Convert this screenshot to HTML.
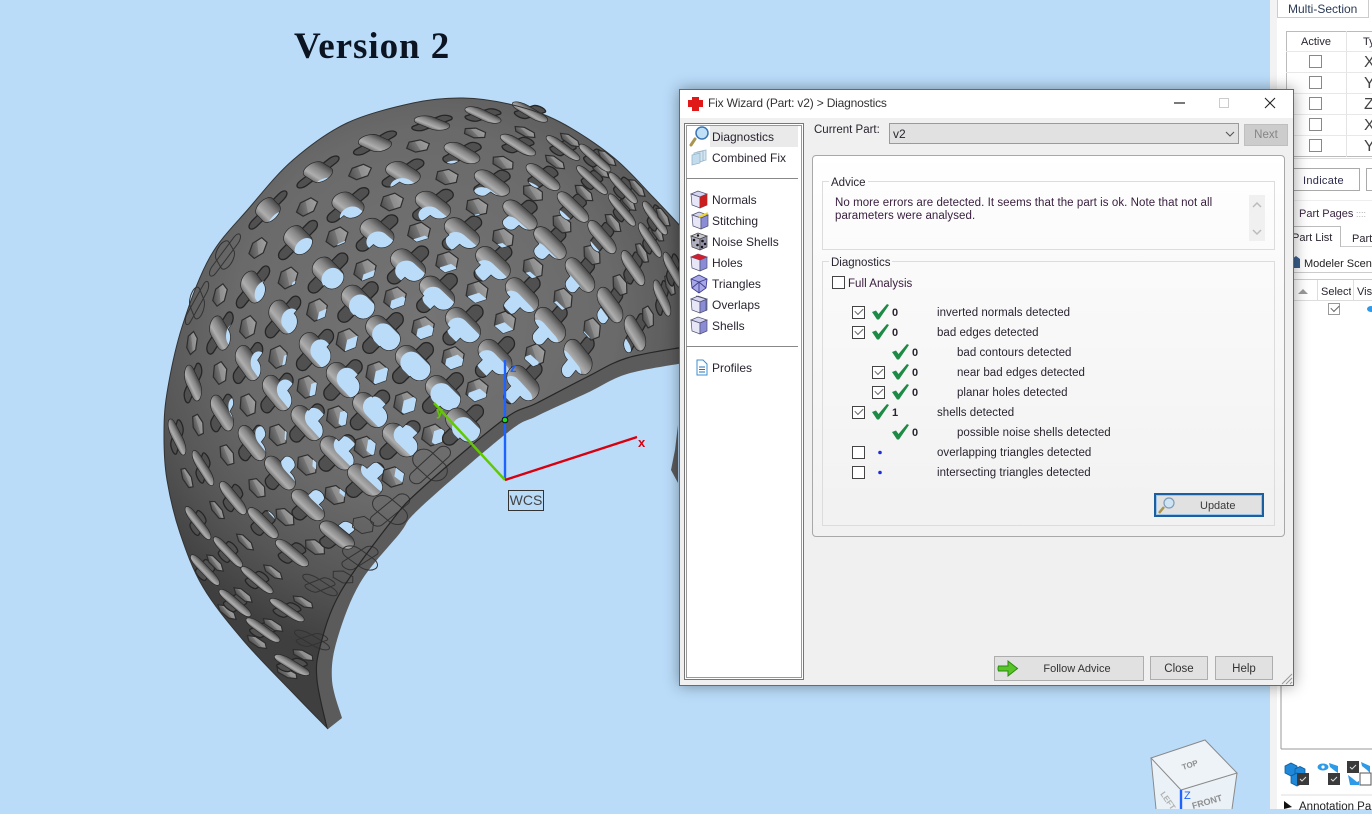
<!DOCTYPE html>
<html><head><meta charset="utf-8"><title>Fix Wizard</title>
<style>
html,body{margin:0;padding:0}
body{width:1372px;height:809px;overflow:hidden;position:relative;background:#badcf9;font-family:"Liberation Sans",sans-serif}
.a{position:absolute;box-sizing:border-box}
.t{position:absolute;white-space:nowrap;font:12px/14px "Liberation Sans",sans-serif;color:#2a2430}
.b{font-weight:bold;font-size:11px}
.l{font-size:11.5px;letter-spacing:.03px}
.cb{position:absolute;box-sizing:border-box;width:13px;height:13px;border:1px solid #444;background:#fff}
.cb.on::after{content:"";position:absolute;left:2px;top:1px;width:7px;height:4px;border-left:1px solid #666;border-bottom:1px solid #666;transform:rotate(-45deg)}
.btn{position:absolute;box-sizing:border-box;background:#e1e1e1;border:1px solid #adadad;text-align:center;font:12px/24px "Liberation Sans",sans-serif;color:#333}
svg{position:absolute;left:0;top:0}
</style></head><body>

<svg width="1372" height="809" viewBox="0 0 1372 809">
<defs>
<radialGradient id="body" gradientUnits="userSpaceOnUse" cx="425" cy="320" r="345">
<stop offset="0" stop-color="#747474"/><stop offset=".55" stop-color="#6a6a6a"/><stop offset=".8" stop-color="#565656"/><stop offset="1" stop-color="#3f3f3f"/></radialGradient>
<linearGradient id="armg" gradientUnits="userSpaceOnUse" x1="0" y1="-11" x2="0" y2="11">
<stop offset="0" stop-color="#4a4a4a"/><stop offset=".35" stop-color="#868686"/><stop offset=".75" stop-color="#aeaeae"/><stop offset="1" stop-color="#777"/></linearGradient>
<linearGradient id="hexg" gradientUnits="userSpaceOnUse" x1="-12" y1="0" x2="12" y2="0">
<stop offset="0" stop-color="#4c4c4c"/><stop offset=".48" stop-color="#757575"/><stop offset=".5" stop-color="#8c8c8c"/><stop offset="1" stop-color="#a0a0a0"/></linearGradient>
<path id="X" d="M-9,-11H9A11,11 0 0 1 9,11H-9A11,11 0 0 1 -9,-11ZM-7,-19A7,7 0 0 1 7,-19V19A7,7 0 0 1 -7,19Z"/>
<path id="XA" d="M-9,-11H9A11,11 0 0 1 9,11H-9A11,11 0 0 1 -9,-11Z"/>
<path id="H" d="M-12,0L-6,-10L6,-10L12,0L6,10L-6,10Z"/>
<path id="XO" vector-effect="non-scaling-stroke" d="M-9,-11H9A11,11 0 0 1 9,11H-9A11,11 0 0 1 -9,-11ZM-7,-19A7,7 0 0 1 7,-19V19A7,7 0 0 1 -7,19Z"/>
<path id="HO" vector-effect="non-scaling-stroke" d="M-12,0L-6,-10L6,-10L12,0L6,10L-6,10Z"/>
</defs>
<path id="rimfill" fill="#5b5b5b"/>
<path id="dome" fill="url(#body)"/>
<g id="holes"></g>
<path id="rimline" fill="none" stroke="#262626" stroke-width="1.2"/>
<path id="sil" fill="none" stroke="#333" stroke-width="1"/>
<path d="M678,425 L675,450 L671,470 L678,483Z" fill="#5c5c5c"/>

<!-- axes -->
<line x1="505" y1="480" x2="505" y2="360" stroke="#1f63ff" stroke-width="2.4"/>
<line x1="505" y1="480" x2="434" y2="403" stroke="#63c800" stroke-width="2.4"/>
<line x1="505" y1="480" x2="637" y2="437" stroke="#d8000f" stroke-width="2.4"/>
<circle cx="505" cy="420" r="2.8" fill="#22d822" stroke="#111" stroke-width="1"/>
<text x="510" y="372" font-family="Liberation Sans" font-size="13" font-weight="bold" fill="#1f63ff">z</text>
<text x="436" y="416" font-family="Liberation Sans" font-size="13" font-weight="bold" fill="#63c800">y</text>
<text x="638" y="447" font-family="Liberation Sans" font-size="13" font-weight="bold" fill="#d8000f">x</text>

<!-- view cube -->
<path d="M1151,758 L1205,740 L1237,773 L1232,809 L1156,809Z" fill="#eaf1f7"/>
<path d="M1151,758 L1205,740 L1237,773 L1181,790Z" fill="#eef3f8" stroke="#8a8a8a" stroke-width="1"/>
<path d="M1151,758 L1156,809 M1237,773 L1232,809" fill="none" stroke="#8a8a8a"/>
<path d="M1181,790 L1181,809" stroke="#1f63ff" stroke-width="2.4"/>
<text x="1184" y="799" font-family="Liberation Sans" font-size="11" fill="#1f63ff">Z</text>
<text transform="translate(1183,770) rotate(-18)" font-family="Liberation Sans" font-size="8" font-weight="bold" fill="#8e8e8e">TOP</text>
<text transform="translate(1160,794) rotate(55)" font-family="Liberation Sans" font-size="8" font-weight="bold" fill="#b0b0b0">LEFT</text>
<text transform="translate(1193,809) rotate(-16)" font-family="Liberation Sans" font-size="9" font-weight="bold" fill="#8e8e8e">FRONT</text>
</svg>

<div class="t" style="left:294px;top:25px;font:bold 37px/44px 'Liberation Serif',serif;color:#0c1422;letter-spacing:.95px">Version 2</div>
<div class="a" style="left:508px;top:490px;width:36px;height:21px;border:1px solid #333;font:14px/19px 'Liberation Sans',sans-serif;color:#444;text-align:center">WCS</div>

<!-- right panel -->
<div class="a" style="left:1270px;top:0;width:102px;height:809px;background:#fff"></div>
<div class="a" style="left:1270px;top:0;width:7px;height:809px;background:#f3f3f3"></div>
<div class="a" style="left:1277px;top:-2px;width:92px;height:20px;border:1px solid #ccc;background:#fff"></div>
<div class="t" style="left:1288px;top:2px;color:#2b3a55">Multi-Section</div>
<div class="a" style="left:1286px;top:31px;width:90px;height:126px;border:1px solid #bbb"></div>
<div class="a" style="left:1346px;top:31px;width:1px;height:126px;background:#e4e4e4"></div>
<div class="a" style="left:1286px;top:51px;width:86px;height:1px;background:#e8e8e8"></div>
<div class="a" style="left:1286px;top:72px;width:86px;height:1px;background:#e8e8e8"></div>
<div class="a" style="left:1286px;top:93px;width:86px;height:1px;background:#e8e8e8"></div>
<div class="a" style="left:1286px;top:114px;width:86px;height:1px;background:#e8e8e8"></div>
<div class="a" style="left:1286px;top:135px;width:86px;height:1px;background:#e8e8e8"></div>
<div class="t" style="left:1301px;top:35px;font-size:11px">Active</div>
<div class="t" style="left:1363px;top:35px;font-size:11px">Ty</div>
<div class="cb" style="left:1309px;top:55px;border-color:#888"></div>
<div class="cb" style="left:1309px;top:76px;border-color:#888"></div>
<div class="cb" style="left:1309px;top:97px;border-color:#888"></div>
<div class="cb" style="left:1309px;top:118px;border-color:#888"></div>
<div class="cb" style="left:1309px;top:139px;border-color:#888"></div>
<div class="t" style="left:1364px;top:54px;font-size:16px;line-height:18px;color:#444">X</div>
<div class="t" style="left:1364px;top:75px;font-size:16px;line-height:18px;color:#444">Y</div>
<div class="t" style="left:1364px;top:96px;font-size:16px;line-height:18px;color:#444">Z</div>
<div class="t" style="left:1364px;top:117px;font-size:16px;line-height:18px;color:#444">X</div>
<div class="t" style="left:1364px;top:138px;font-size:16px;line-height:18px;color:#444">Y</div>
<div class="a" style="left:1280px;top:158px;width:92px;height:1px;background:#ddd"></div>
<div class="a" style="left:1286px;top:168px;width:74px;height:23px;border:1px solid #aaa;background:#fff"></div>
<div class="t" style="left:1303px;top:174px;font-size:11px;color:#2a2a4a;letter-spacing:.3px">Indicate</div>
<div class="a" style="left:1366px;top:168px;width:10px;height:23px;border:1px solid #aaa"></div>
<div class="a" style="left:1280px;top:200px;width:92px;height:1px;background:#eee"></div>
<div class="t" style="left:1299px;top:207px;font-size:11px;color:#3a2440">Part Pages</div>
<div class="t" style="left:1356px;top:207px;font-size:9px;color:#aaa">::::</div>
<div class="a" style="left:1280px;top:226px;width:61px;height:21px;border:1px solid #bbb;border-bottom:0;background:#fff"></div>
<div class="a" style="left:1341px;top:246px;width:31px;height:1px;background:#ccc"></div>
<div class="t" style="left:1292px;top:231px;font-size:11px;width:50px">Part List</div>
<div class="t" style="left:1352px;top:232px;font-size:11px">Part</div>
<svg width="1372" height="809" style="pointer-events:none">
<path d="M1296,256 l4,3 v9 h-8 v-9z" fill="#3b5f8e"/>
<path d="M1281,749 H1372 M1281,250 V749" stroke="#999" fill="none"/>
</svg>
<div class="t" style="left:1304px;top:257px;font-size:11px;color:#222">Modeler Scene</div>
<div class="a" style="left:1280px;top:272px;width:92px;height:1px;background:#ccc"></div>
<div class="a" style="left:1280px;top:279px;width:92px;height:1px;background:#ccc"></div>
<div class="a" style="left:1280px;top:300px;width:92px;height:1px;background:#ddd"></div>
<div class="a" style="left:1317px;top:280px;width:1px;height:20px;background:#ddd"></div>
<div class="a" style="left:1353px;top:280px;width:1px;height:20px;background:#ddd"></div>
<svg width="1372" height="809"><path d="M1298,294 L1303,289 L1308,294Z" fill="#999"/></svg>
<div class="t" style="left:1321px;top:285px;font-size:11px;width:30px;overflow:hidden">Select</div>
<div class="t" style="left:1357px;top:285px;font-size:11px">Vis</div>
<div class="cb on" style="left:1328px;top:303px;width:12px;height:12px;border-color:#999"></div>
<svg width="1372" height="809">
<ellipse cx="1371" cy="309" rx="4" ry="3" fill="#2d9be8"/>
<!-- bottom icons -->
<g fill="#1f88d8" stroke="#0c5c9c" stroke-width=".8">
<path d="M1285,766 l6,-3 l6,3 v7 l-6,3 l-6,-3z"/><path d="M1295,769 l5,-2.500 l5,2.500 v5 h-10z"/><path d="M1291,776 l6,-3 l4,2 v9 l-4,2 l-6,-3z"/>
</g>
<rect x="1297" y="773" width="12" height="12" fill="#3a3a3a"/><path d="M1300,779 l2,2 l4,-4" stroke="#ddd" fill="none"/>
<ellipse cx="1323" cy="767" rx="5.500" ry="3.500" fill="#2d9be8"/><circle cx="1323" cy="767" r="1.600" fill="#fff"/>
<path d="M1329,763 l9,3 v7 l-3,-2 l-5,-4z" fill="#2d9be8"/>
<rect x="1328" y="773" width="12" height="12" fill="#3a3a3a"/><path d="M1331,779 l2,2 l4,-4" stroke="#ddd" fill="none"/>
<rect x="1347" y="761" width="12" height="12" fill="#3a3a3a"/><path d="M1350,767 l2,2 l4,-4" stroke="#ddd" fill="none"/>
<path d="M1361,762 l9,4 v7 l-3,-3 l-5,-4z" fill="#2d9be8"/>
<path d="M1348,775 l4,3 l5,4 l2,-1 v4 h-9z" fill="#2d9be8"/>
<rect x="1360" y="773" width="11" height="12" fill="#fff" stroke="#555"/>
<path d="M1281,795 H1372" stroke="#ddd"/>
<path d="M1284,801 L1292,807 L1284,809Z" fill="#111"/>
</svg>
<div class="t" style="left:1299px;top:800px;font-size:11.500px;color:#222">Annotation Pa</div>

<!-- dialog -->
<div class="a" style="left:679px;top:89px;width:615px;height:597px;background:#f0f0f0;border:1px solid #6a6a6a;box-shadow:0 0 14px rgba(0,0,0,.38)"></div>
<div class="a" style="left:680px;top:90px;width:613px;height:28px;background:#fff"></div>
<svg width="1372" height="809">
<path d="M692,97 h7 v3 h4 v7 h-4 v4 h-7 v-4 h-4 v-7 h4z" fill="#e01818"/>
<path d="M1174,103 H1185" stroke="#222" stroke-width="1.2"/>
<rect x="1219.500" y="98.500" width="9" height="9" fill="none" stroke="#ccc"/>
<path d="M1265,98 L1275,108 M1275,98 L1265,108" stroke="#222" stroke-width="1.1"/>
</svg>
<div class="t" style="left:708px;top:96px;color:#333;letter-spacing:-.18px">Fix Wizard (Part: v2) &gt; Diagnostics</div>

<!-- left list -->
<div class="a" style="left:684px;top:123px;width:120px;height:557px;background:#fff;border:1px solid #777;outline:0;box-shadow:inset 0 0 0 1px #fff,inset 0 0 0 2px #999"></div>
<div class="a" style="left:710px;top:126px;width:88px;height:21px;background:#eaeaea"></div>
<div class="a" style="left:686px;top:178px;width:112px;height:1px;background:#888"></div>
<div class="a" style="left:686px;top:346px;width:112px;height:1px;background:#888"></div>
<div class="t" style="left:712px;top:130px">Diagnostics</div>
<div class="t" style="left:712px;top:151px">Combined Fix</div>
<div class="t" style="left:712px;top:193px">Normals</div>
<div class="t" style="left:712px;top:214px">Stitching</div>
<div class="t" style="left:712px;top:235px">Noise Shells</div>
<div class="t" style="left:712px;top:256px">Holes</div>
<div class="t" style="left:712px;top:277px">Triangles</div>
<div class="t" style="left:712px;top:298px">Overlaps</div>
<div class="t" style="left:712px;top:319px">Shells</div>
<div class="t" style="left:712px;top:361px">Profiles</div>
<svg width="1372" height="809">
<defs>
<g id="cube" stroke="#4f5070" stroke-width=".7"><path d="M1,4 L8,1 L17,4 L10,7Z" fill="#d5d5f0"/><path d="M1,4 L10,7 V18 L2,15Z" fill="#e6e6f6"/><path d="M10,7 L17,4 V15 L10,18Z" fill="#8a8cd6"/></g>
</defs>
<!-- magnifier -->
<path d="M695,139 L691,145" stroke="#a89650" stroke-width="3" stroke-linecap="round"/>
<circle cx="702" cy="133" r="6" fill="#bfe0f5" stroke="#3a74b8" stroke-width="1.500"/>
<!-- combined -->
<g stroke="#9ab4c8" fill="#d3e6f2" stroke-width=".8"><path d="M697,152 l9,-2 v10 l-9,2z"/><path d="M694,153 l9,-2 v10 l-9,2z"/><path d="M692,155 l8,-2 v10 l-8,2z" fill="#c2dcee"/></g>
<use href="#cube" x="690" y="190"/><path d="M700,197 L707,194 V205 L700,208Z" fill="#c81e1e"/>
<use href="#cube" x="691" y="211"/><path d="M699,217 L708,213" stroke="#f2d81e" stroke-width="2"/>
<g transform="translate(690,232)"><path d="M1,4 L8,1 L17,4 L10,7Z" fill="#c8c8d0" stroke="#444" stroke-width=".7"/><path d="M1,4 L10,7 V18 L2,15Z" fill="#b0b0c0" stroke="#444" stroke-width=".7"/><path d="M10,7 L17,4 V15 L10,18Z" fill="#9090a8" stroke="#444" stroke-width=".7"/><g fill="#111"><circle cx="8" cy="3.500" r="1.200"/><circle cx="4" cy="8" r="1.300"/><circle cx="7.500" cy="13" r="1.300"/><circle cx="12.500" cy="9" r="1.300"/><circle cx="15" cy="12" r="1.200"/><circle cx="12" cy="15" r="1.200"/></g></g>
<use href="#cube" x="690" y="253"/><path d="M691,257 L698,254 L707,257 L700,260Z" fill="#d02030"/>
<g transform="translate(690,274)" stroke="#3c3c90" stroke-width=".9" fill="#a8a8e6"><path d="M9,1 L17,5 L16,14 L9,19 L2,14 L1,5Z"/><path d="M1,5 L9,8 L17,5 M9,8 L9,19 M9,8 L2,14 M9,8 L16,14" fill="none"/></g>
<use href="#cube" x="690" y="295"/><path d="M696,296 L706,299 V311" fill="none" stroke="#4f5070" stroke-width=".7"/>
<use href="#cube" x="690" y="316"/>
<path d="M697,360 H703 L707,364 V375 H697Z" fill="#fff" stroke="#3a8fd0" stroke-width="1"/><path d="M699,367 H705 M699,369.500 H705 M699,372 H705" stroke="#2870b0"/>
</svg>

<!-- top row -->
<div class="t" style="left:814px;top:123px;font-size:11.500px">Current Part:</div>
<div class="a" style="left:889px;top:123px;width:350px;height:21px;background:#e1e1e1;border:1px solid #9a9a9a"></div>
<div class="t" style="left:893px;top:127px">v2</div>
<svg width="1372" height="809"><path d="M1226,132 L1230,136 L1234,132" fill="none" stroke="#555" stroke-width="1.100"/></svg>
<div class="a" style="left:1244px;top:124px;width:44px;height:22px;background:#cccccc;border:1px solid #bfbfbf;text-align:center;font:11.500px/20px 'Liberation Sans',sans-serif;color:#858585">Next</div>

<!-- main group -->
<div class="a" style="left:812px;top:155px;width:473px;height:382px;border:1px solid #a8a8a8;border-radius:4px;background:linear-gradient(#fff,#fafafa 30%,#f1f1f1)"></div>
<div class="a" style="left:822px;top:181px;width:453px;height:69px;border:1px solid #dcdcdc"></div>
<div class="t" style="left:829px;top:176px;padding:0 2px;background:#fdfdfd;font-size:11.500px">Advice</div>
<div class="t" style="left:835px;top:197px;font-size:11.500px;line-height:13px;color:#3a2040;letter-spacing:.06px">No more errors are detected. It seems that the part is ok. Note that not all<br>parameters were analysed.</div>
<div class="a" style="left:1249px;top:195px;width:16px;height:46px;background:#f0f0f0"></div>
<svg width="1372" height="809"><path d="M1253,207 L1257,203 L1261,207 M1253,230 L1257,234 L1261,230" fill="none" stroke="#bbb" stroke-width="1.500"/></svg>
<div class="a" style="left:822px;top:261px;width:453px;height:265px;border:1px solid #dcdcdc"></div>
<div class="t" style="left:829px;top:256px;padding:0 2px;background:#fafafa;font-size:11.500px">Diagnostics</div>
<div class="cb" style="left:832px;top:276px"></div>
<div class="t l" style="left:848px;top:277px;color:#3a2040">Full Analysis</div>

<div class="cb on" style="left:852px;top:306px"></div>
<div class="cb on" style="left:852px;top:326px"></div>
<div class="cb on" style="left:872px;top:366px"></div>
<div class="cb on" style="left:872px;top:386px"></div>
<div class="cb on" style="left:852px;top:406px"></div>
<div class="cb" style="left:852px;top:446px"></div>
<div class="cb" style="left:852px;top:466px"></div>
<svg width="1372" height="809">
<defs><path id="chk" d="M0,8 L4,6.500 L6.500,10 L15,0 L17,1 L7,15.500 L5,15.500Z" fill="#1d8a45"/></defs>
<use href="#chk" x="872" y="304"/><use href="#chk" x="872" y="324"/><use href="#chk" x="892" y="344"/><use href="#chk" x="892" y="364"/><use href="#chk" x="892" y="384"/><use href="#chk" x="872" y="404"/><use href="#chk" x="892" y="424"/>
<circle cx="880" cy="452.500" r="1.800" fill="#1c2fd8"/><circle cx="880" cy="472.500" r="1.800" fill="#1c2fd8"/>
</svg>
<div class="t b" style="left:892px;top:306px">0</div>
<div class="t b" style="left:892px;top:326px">0</div>
<div class="t b" style="left:912px;top:346px">0</div>
<div class="t b" style="left:912px;top:366px">0</div>
<div class="t b" style="left:912px;top:386px">0</div>
<div class="t b" style="left:892px;top:406px">1</div>
<div class="t b" style="left:912px;top:426px">0</div>
<div class="t l" style="left:937px;top:306px">inverted normals detected</div>
<div class="t l" style="left:937px;top:326px">bad edges detected</div>
<div class="t l" style="left:957px;top:346px">bad contours detected</div>
<div class="t l" style="left:957px;top:366px">near bad edges detected</div>
<div class="t l" style="left:957px;top:386px">planar holes detected</div>
<div class="t l" style="left:937px;top:406px">shells detected</div>
<div class="t l" style="left:957px;top:426px">possible noise shells detected</div>
<div class="t l" style="left:937px;top:446px">overlapping triangles detected</div>
<div class="t l" style="left:937px;top:466px">intersecting triangles detected</div>

<div class="a" style="left:1154px;top:493px;width:110px;height:24px;background:#e1e1e1;border:2px solid #1b5f9e;box-shadow:inset 0 0 0 1px #9cc4e8"></div>
<div class="t" style="left:1200px;top:499px;font-size:11px;color:#3a3a3a">Update</div>
<svg width="1372" height="809"><path d="M1164,507 L1159,513" stroke="#a89650" stroke-width="2.500"/><circle cx="1169" cy="503" r="5" fill="#cfe4f3" stroke="#7d9cb8" stroke-width="1.200"/></svg>

<!-- bottom buttons -->
<div class="btn" style="left:994px;top:656px;width:150px;height:25px;line-height:25px;padding-left:16px;font-size:11px">Follow Advice</div>
<div class="btn" style="left:1150px;top:656px;width:58px;height:24px;font-size:11.500px">Close</div>
<div class="btn" style="left:1215px;top:656px;width:58px;height:24px;font-size:11.500px">Help</div>
<svg width="1372" height="809">
<path d="M998.500,666 H1008 V661 L1017.500,668.500 L1008,676 V671 H998.500 Q997.500,668.500 998.500,666Z" fill="#58c428" stroke="#2a8a10" stroke-width="1"/>
<path d="M1282,684 L1292,674 M1286,684 L1292,678 M1290,684 L1292,682" stroke="#999" stroke-width="1"/>
</svg>

<script>
(function(){
function cr(p,close){var s='M'+p[0][0]+','+p[0][1];for(var i=0;i<p.length-1;i++){var a=p[Math.max(i-1,0)],b=p[i],c=p[i+1],d=p[Math.min(i+2,p.length-1)];
s+='C'+(b[0]+(c[0]-a[0])/6).toFixed(1)+','+(b[1]+(c[1]-a[1])/6).toFixed(1)+' '+(c[0]-(d[0]-b[0])/6).toFixed(1)+','+(c[1]-(d[1]-b[1])/6).toFixed(1)+' '+c[0]+','+c[1];}return s;}
var O=[[328,729],[293,693],[243,640],[203,587],[180,533],[167,480],[164,437],[167,393],[182,327],[210,257],[250,207],[293,160],[347,123],[413,103],[463,98],[513,105],[560,122],[613,157],[653,197],[684,230]];
var R=[[327,728],[317,680],[320,647],[340,593],[390,523],[420,490],[503,420],[537,403],[587,377],[627,358],[684,347]];
var B=[[342,718],[332,680],[337,640],[360,583],[400,533],[420,508],[507,433],[537,416],[587,393],[627,374],[684,363]];
function cont(s){return s.replace(/^M/,'L');}
var rp=R.slice().reverse();
document.getElementById('dome').setAttribute('d',cr(O)+' '+cont(cr(rp))+'Z');
var Br=B.slice().reverse();
document.getElementById('rimfill').setAttribute('d',cr(O)+' '+cont(cr(Br))+'L328,729Z');
document.getElementById('rimline').setAttribute('d',cr(R));
document.getElementById('sil').setAttribute('d',cr(O));
var D=[
[-15,[227,612,257,642,287,673],[]],
[-14,[205,570,235,603,263,630,292,665],[]],
[-13,[215,563,243,595,273,625,303,655],[]],
[-12,[198,523,228,552,257,580,287,610,312,640],[4]],
[-11,[187,478,217,510,245,542,273,572,303,602],[]],
[-10,[177,437,203,468,233,498,263,523,292,553,320,585],[5]],
[-9,[198,425,227,455,257,488,285,517,315,547,343,577],[5]],
[-8,[193,383,222,413,252,443,280,473,308,505,337,535,360,558],[6]],
[-7,[192,343,220,373,248,405,278,435,307,465,335,495,363,525],[6]],
[-6,[197,303,220,333,248,363,277,393,307,423,337,453,365,480,390,510],[0,7]],
[-5,[220,295,248,327,278,357,307,387,337,417,365,447,393,477],[]],
[-4,[225,255,253,287,283,317,315,350,343,380,370,410,400,440,430,465],[0,7]],
[-3,[258,248,288,278,317,310,347,340,377,373,405,403,433,435],[]],
[-2,[268,210,298,240,328,273,358,302,383,333,413,363,443,393,463,425],[]],
[-1,[307,207,337,237,365,270,395,298,423,328,453,358,477,390],[]],
[0,[318,172,348,205,377,233,408,265,437,293,463,325,495,357,523,383],[]],
[1,[360,172,392,202,419,232,447,262,477,292,505,322,535,355],[]],
[2,[375,143,403,173,433,205,462,233,493,263,522,295,550,325,578,357],[]],
[3,[418,146,447,177,477,207,503,238,533,268,563,299,592,329],[]],
[4,[432,123,462,153,492,183,520,215,550,243,580,275,610,305,635,333],[]],
[5,[475,133,503,163,533,193,562,224,592,255,620,285,648,317],[]],
[6,[483,115,518,145,543,177,573,207,602,237,633,268,662,298],[]],
[7,[525,132,555,162,584,193,613,223,642,253,670,285],[]],
[8,[530,112,563,148,592,180,622,210,650,240,673,270],[]],
[9,[570,140,600,170,628,202,657,232],[]],
[10,[595,158,623,188,655,218],[]],
[11,[607,158,637,188,663,217],[]]
];
var Cx=425,Cy=365,RR=272,s45=Math.SQRT1_2,h='',n=0;
D.forEach(function(c){var isX=(c[0]%2===0),p=c[1],o=c[2];
for(var i=0;i<p.length/2;i++){var x=p[2*i],y=p[2*i+1];
var dx=(x-Cx)/RR,dy=(y-Cy)/RR,rr=dx*dx+dy*dy,r=Math.sqrt(rr)||1,ux=dx/r,uy=dy/r;
var f=Math.pow(1-Math.min(rr,.82),.6);
var k=f-1,a=1+k*ux*ux,b=k*ux*uy,d=1+k*uy*uy;
var c1=s45,s1=s45;if(!isX){c1=.94;s1=-.34;}
var m00=a*c1+b*s1,m10=b*c1+d*s1,m01=-a*s1+b*c1,m11=-b*s1+d*c1;
var mm=[m00,m10,m01,m11].map(function(v){return v.toFixed(3);}).join(' ');
var T='matrix('+mm+' '+x+' '+y+')';
if(o.indexOf(i)>=0){h+='<use href="#'+(isX?'XO':'HO')+'" transform="'+T+'" fill="none" stroke="#333" stroke-width="1"/>';continue;}
var vx=480-x,vy=450-y,vl=Math.sqrt(vx*vx+vy*vy)||1,sl=Math.min(22,7+14*r),sx=vx/vl*sl,sy=vy/vl*sl;
var T2='matrix('+mm+' '+(x+sx).toFixed(1)+' '+(y+sy).toFixed(1)+')';
var id='c'+(n++);
h+='<clipPath id="'+id+'"><use href="#'+(isX?'X':'H')+'" transform="'+T+'"/></clipPath>';
if(isX){
h+='<use href="#XO" transform="'+T+'" fill="#505050" stroke="#262626" stroke-width="1.300"/>';
h+='<use href="#XA" transform="'+T+'" fill="url(#armg)"/>';
h+='<g clip-path="url(#'+id+')"><use href="#XA" transform="'+T2+'" fill="#badcf9"/></g>';
}else{
h+='<use href="#HO" transform="'+T+'" fill="url(#hexg)" stroke="#2e2e2e" stroke-width="1.200"/>';
h+='<g clip-path="url(#'+id+')"><use href="#H" transform="'+T2+'" fill="#badcf9"/></g>';
}
}});
document.getElementById('holes').innerHTML=h;
})();
</script>
</body></html>
